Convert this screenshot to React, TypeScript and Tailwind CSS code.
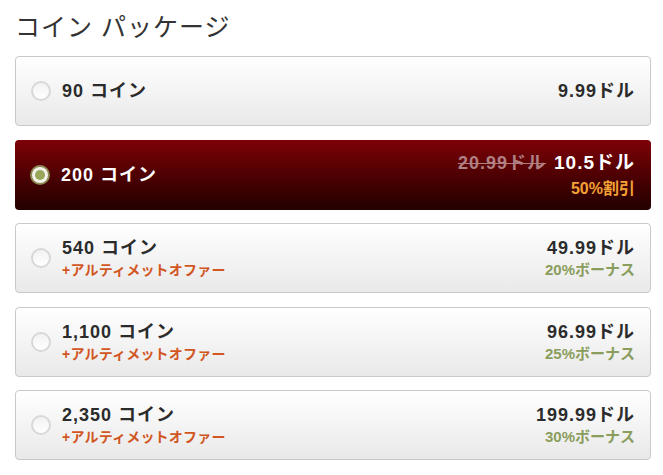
import React, { useState } from 'react';

type Pack = {
  id: string;
  coins: string;
  price: string;
  oldPrice?: string;
  note?: string;
  ultimate?: boolean;
};

const packs: Pack[] = [
  { id: 'p90', coins: '90 コイン', price: '9.99ドル' },
  { id: 'p200', coins: '200 コイン', price: '10.5ドル', oldPrice: '20.99ドル', note: '50%割引' },
  { id: 'p540', coins: '540 コイン', price: '49.99ドル', note: '20%ボーナス', ultimate: true },
  { id: 'p1100', coins: '1,100 コイン', price: '96.99ドル', note: '25%ボーナス', ultimate: true },
  { id: 'p2350', coins: '2,350 コイン', price: '199.99ドル', note: '30%ボーナス', ultimate: true },
];

const Radio: React.FC<{ checked: boolean }> = ({ checked }) =>
  checked ? (
    <span className="flex h-[20px] w-[20px] shrink-0 items-center justify-center rounded-full bg-[#8c8a52]">
      <span className="flex h-[16px] w-[16px] items-center justify-center rounded-full bg-[#f4f2ea]">
        <span className="h-[10px] w-[10px] rounded-full bg-[#98a65a]"></span>
      </span>
    </span>
  ) : (
    <span className="h-[20px] w-[20px] shrink-0 rounded-full border-2 border-[#d8d8d8] bg-gradient-to-b from-[#f2f2f2] to-white"></span>
  );

const App: React.FC = () => {
  const [selected, setSelected] = useState('p200');

  return (
    <div className="min-h-screen bg-white px-[15px] pt-[11px] font-['Liberation_Sans','Noto_Sans_CJK_JP',sans-serif] text-[#2b2b2b]">
      <h1 className="mb-[13px] text-[25px] leading-[32px] tracking-[1px] text-[#333]">コイン パッケージ</h1>

      <div className="flex w-[636px] flex-col gap-[13.5px]">
        {packs.map((p) => {
          const active = selected === p.id;
          return (
            <div
              key={p.id}
              onClick={() => setSelected(p.id)}
              className={
                active
                  ? 'flex h-[70px] cursor-pointer items-center rounded-[4px] bg-gradient-to-b from-[#7e0209] to-[#230000] pl-[15px] pr-[16px] text-white'
                  : 'flex h-[70px] cursor-pointer items-center rounded-[4px] border border-[#c9c9c9] bg-gradient-to-b from-[#ffffff] to-[#e9e9e9] pl-[15px] pr-[15px]'
              }
            >
              <Radio checked={active} />
              <div className="ml-[11px] flex flex-1 flex-col">
                <span className="text-[18px] font-bold leading-[24px] tracking-[1px]">{p.coins}</span>
                {p.ultimate && (
                  <span className="text-[14px] font-bold leading-[20px] tracking-[0.2px] text-[#d2561f]">+アルティメットオファー</span>
                )}
              </div>
              <div className="flex flex-col items-end">
                <div className="flex items-baseline gap-[8px]">
                  {p.oldPrice && (
                    <span className="text-[18px] font-bold leading-[24px] tracking-[1px] text-[#b07f82] line-through">{p.oldPrice}</span>
                  )}
                  <span className={active ? 'text-[19px] font-bold leading-[24px] tracking-[1px]' : 'text-[18px] font-bold leading-[24px] tracking-[1px]'}>{p.price}</span>
                </div>
                {p.note && (
                  <span
                    className={
                      active
                        ? 'mt-[4px] text-[16px] font-bold leading-[20px] text-[#f3a236]'
                        : 'text-[15px] font-bold leading-[20px] text-[#8a9d5c]'
                    }
                  >
                    {p.note}
                  </span>
                )}
              </div>
            </div>
          );
        })}
      </div>
    </div>
  );
};

export default App;
